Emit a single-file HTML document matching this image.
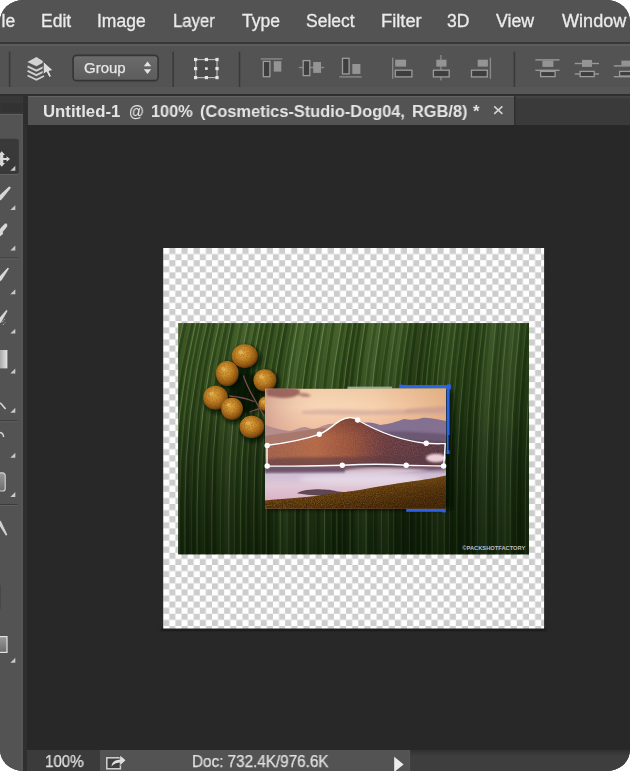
<!DOCTYPE html>
<html>
<head>
<meta charset="utf-8">
<title>Photoshop</title>
<style>
html,body{margin:0;padding:0;background:#fff;}
body{width:630px;height:771px;overflow:hidden;font-family:"Liberation Sans",sans-serif;}
#app{position:absolute;left:0;top:0;width:630px;height:771px;border-radius:23px / 21.5px;overflow:hidden;background:#282828;}
.abs{position:absolute;}
#menubar{left:0;top:0;width:630px;height:43px;background:#535353;}
.mi,.tw,.st,.m{will-change:transform;}
.mi{position:absolute;top:10.4px;height:22px;line-height:22px;font-size:17.5px;color:#ebebeb;-webkit-text-stroke:0.3px #ebebeb;white-space:nowrap;transform-origin:0 50%;}
#optbar{left:0;top:43px;width:630px;height:53px;background:#535353;}
.vsep{position:absolute;width:1px;background:#3d3d3d;box-shadow:1px 0 0 #5c5c5c;}
#tabbar{left:0;top:96px;width:630px;height:28.7px;background:linear-gradient(#464646,#3a3a3a 3.5px);}
#tab{left:28.3px;top:96px;width:485.7px;height:28.7px;box-shadow:1.5px 0 0 #2f2f2f;background:#535353;border-top:1px solid #636363;box-sizing:border-box;}
#tabtext{left:0;top:101.8px;height:20px;line-height:20px;font-size:16.8px;font-weight:bold;color:#e4e4e4;white-space:nowrap;}
.tw{position:absolute;top:0;transform-origin:0 50%;}
#toolhead{left:0;top:95.6px;width:24.3px;height:18.4px;background:#373737;}
#toolbar{left:0;top:114px;width:23.4px;height:657px;background:#535353;box-sizing:border-box;border-right:2px solid #565656;border-top:1.4px solid #626262;}
#toolgap{left:23.4px;top:96px;width:4px;height:675px;background:#2f2f2f;}
#statusbar{left:27.4px;top:750px;width:602px;height:21px;background:#535353;}
#zoomfield{left:27.4px;top:750px;width:72.6px;height:21px;background:#3b3b3b;}
#scrolltrack{left:409px;top:750px;width:221px;height:21px;background:linear-gradient(#313131,#3e3e3e 6px);border-left:1px solid #585858;box-sizing:border-box;}
.st{position:absolute;-webkit-text-stroke:0.25px #e0e0e0;font-size:16px;transform:scaleX(0.94);color:#e0e0e0;white-space:nowrap;line-height:18px;height:18px;transform-origin:0 50%;}
</style>
</head>
<body>
<div id="app">
  <!-- canvas area background is #282828 -->
<!--DOC-->
<svg id="doc" class="abs" style="left:0;top:0" width="630" height="771" viewBox="0 0 630 771">
<defs>
<pattern id="chk" x="163.2" y="248.0" width="12.192" height="12.192" patternUnits="userSpaceOnUse"><rect width="12.192" height="12.192" fill="#fefefe"/><rect x="6.096" width="6.096" height="6.096" fill="#cdcdcd"/><rect y="6.096" width="6.096" height="6.096" fill="#cdcdcd"/></pattern>
<filter id="b06" x="-5%" y="-5%" width="110%" height="110%"><feGaussianBlur stdDeviation="0.55"/></filter>
<filter id="b1" x="-10%" y="-10%" width="120%" height="120%"><feGaussianBlur stdDeviation="1"/></filter>
<filter id="b2" x="-20%" y="-20%" width="140%" height="140%"><feGaussianBlur stdDeviation="2.2"/></filter>
<filter id="b4" x="-30%" y="-30%" width="160%" height="160%"><feGaussianBlur stdDeviation="4"/></filter>
<clipPath id="cv"><rect x="163.2" y="248.0" width="380.9" height="380.6"/></clipPath>
<clipPath id="lf"><rect x="178.1" y="323.1" width="350.9" height="231.5"/></clipPath>
<linearGradient id="lfv" x1="0" y1="0" x2="0" y2="1"><stop offset="0" stop-color="#405c26"/><stop offset="0.25" stop-color="#36501f"/><stop offset="0.5" stop-color="#2a401a"/><stop offset="1" stop-color="#1c2e10"/></linearGradient>
<linearGradient id="lfh" x1="0" y1="0" x2="1" y2="0.35"><stop offset="0" stop-color="#5f7a3c" stop-opacity="0.22"/><stop offset="0.35" stop-color="#405a20" stop-opacity="0.1"/><stop offset="0.7" stop-color="#0a1a04" stop-opacity="0.22"/><stop offset="1" stop-color="#081803" stop-opacity="0.42"/></linearGradient>
<radialGradient id="fr" cx="0.42" cy="0.38" r="0.65"><stop offset="0" stop-color="#e0aa44"/><stop offset="0.4" stop-color="#ca8a2a"/><stop offset="0.8" stop-color="#905614"/><stop offset="1" stop-color="#4e2c08"/></radialGradient>
</defs>
<rect x="160.2" y="627.6" width="385.9" height="4" fill="#1d1d1d" filter="url(#b1)"/>
<g clip-path="url(#cv)"><rect x="157.2" y="242.0" width="392.9" height="392.6" fill="url(#chk)" filter="url(#b06)"/></g>
<g clip-path="url(#lf)">
<rect x="178.1" y="323.1" width="350.9" height="231.5" fill="url(#lfv)"/>
<rect x="178.1" y="323.1" width="350.9" height="231.5" fill="url(#lfh)"/>
<path d="M150.4 557 L150.4 505 Q150.4 412 171.6 321 M156.7 557 L156.7 505 Q156.7 412 177.7 321 M164.2 557 L164.2 505 Q164.2 412 185.9 321 M171.3 557 L171.3 505 Q171.3 412 193.3 321 M176.6 557 L176.6 505 Q176.6 412 198.4 321 M181.8 557 L181.8 505 Q181.8 412 202.8 321 M187.2 557 L187.2 505 Q187.2 412 209.7 321 M193.9 557 L193.9 505 Q193.9 412 214.7 321 M199.4 557 L199.4 505 Q199.4 412 221.8 321 M206.9 557 L206.9 505 Q206.9 412 227.6 321 M214.1 557 L214.1 505 Q214.1 412 233.7 321 M222.8 557 L222.8 505 Q222.8 412 242.7 321 M231.1 557 L231.1 505 Q231.1 412 250.3 321 M236.7 557 L236.7 505 Q236.7 412 257.3 321 M243.0 557 L243.0 505 Q243.0 412 262.8 321 M248.7 557 L248.7 505 Q248.7 412 267.8 321 M256.2 557 L256.2 505 Q256.2 412 274.3 321 M263.3 557 L263.3 505 Q263.3 412 281.5 321 M268.6 557 L268.6 505 Q268.6 412 287.1 321 M276.2 557 L276.2 505 Q276.2 412 294.8 321 M282.5 557 L282.5 505 Q282.5 412 300.2 321 M289.3 557 L289.3 505 Q289.3 412 307.7 321 M297.3 557 L297.3 505 Q297.3 412 315.1 321 M303.3 557 L303.3 505 Q303.3 412 321.6 321 M310.4 557 L310.4 505 Q310.4 412 327.0 321 M318.2 557 L318.2 505 Q318.2 412 334.1 321 M326.9 557 L326.9 505 Q326.9 412 344.0 321 M333.5 557 L333.5 505 Q333.5 412 349.8 321 M339.2 557 L339.2 505 Q339.2 412 355.6 321 M344.5 557 L344.5 505 Q344.5 412 360.5 321 M352.4 557 L352.4 505 Q352.4 412 367.5 321 M360.7 557 L360.7 505 Q360.7 412 376.2 321 M368.4 557 L368.4 505 Q368.4 412 383.2 321 M375.6 557 L375.6 505 Q375.6 412 391.4 321 M383.8 557 L383.8 505 Q383.8 412 398.6 321 M390.7 557 L390.7 505 Q390.7 412 405.3 321 M396.0 557 L396.0 505 Q396.0 412 411.1 321 M403.5 557 L403.5 505 Q403.5 412 416.6 321 M411.7 557 L411.7 505 Q411.7 412 425.4 321 M418.2 557 L418.2 505 Q418.2 412 431.2 321 M423.4 557 L423.4 505 Q423.4 412 435.3 321 M429.1 557 L429.1 505 Q429.1 412 442.4 321 M434.4 557 L434.4 505 Q434.4 412 446.3 321 M440.0 557 L440.0 505 Q440.0 412 453.1 321 M446.5 557 L446.5 505 Q446.5 412 458.4 321 M451.9 557 L451.9 505 Q451.9 412 464.6 321 M459.1 557 L459.1 505 Q459.1 412 471.5 321 M467.2 557 L467.2 505 Q467.2 412 478.2 321 M473.3 557 L473.3 505 Q473.3 412 485.2 321 M479.8 557 L479.8 505 Q479.8 412 489.7 321 M488.4 557 L488.4 505 Q488.4 412 498.2 321 M494.2 557 L494.2 505 Q494.2 412 504.3 321 M500.1 557 L500.1 505 Q500.1 412 509.5 321 M507.4 557 L507.4 505 Q507.4 412 516.9 321 M512.5 557 L512.5 505 Q512.5 412 522.2 321 M519.0 557 L519.0 505 Q519.0 412 528.7 321 M527.6 557 L527.6 505 Q527.6 412 536.8 321 M534.6 557 L534.6 505 Q534.6 412 542.3 321" fill="none" stroke="#0d1a06" stroke-opacity="0.3" stroke-width="2.8" filter="url(#b06)"/>
<path d="M148.1 557 L148.1 505 Q148.1 412 169.3 321 M161.9 557 L161.9 505 Q161.9 412 183.6 321 M174.3 557 L174.3 505 Q174.3 412 196.1 321 M184.9 557 L184.9 505 Q184.9 412 207.4 321 M197.1 557 L197.1 505 Q197.1 412 219.5 321 M211.8 557 L211.8 505 Q211.8 412 231.4 321 M228.8 557 L228.8 505 Q228.8 412 248.0 321 M240.7 557 L240.7 505 Q240.7 412 260.5 321 M253.9 557 L253.9 505 Q253.9 412 272.0 321 M266.3 557 L266.3 505 Q266.3 412 284.8 321 M280.2 557 L280.2 505 Q280.2 412 297.9 321 M295.0 557 L295.0 505 Q295.0 412 312.8 321 M308.1 557 L308.1 505 Q308.1 412 324.7 321 M324.6 557 L324.6 505 Q324.6 412 341.7 321 M336.9 557 L336.9 505 Q336.9 412 353.3 321 M350.1 557 L350.1 505 Q350.1 412 365.2 321 M366.1 557 L366.1 505 Q366.1 412 380.9 321" fill="none" stroke="#90aa6a" stroke-opacity="0.42" stroke-width="1" filter="url(#b06)"/>
<path d="M381.5 557 L381.5 505 Q381.5 412 396.3 321 M393.7 557 L393.7 505 Q393.7 412 408.8 321 M409.4 557 L409.4 505 Q409.4 412 423.1 321 M421.1 557 L421.1 505 Q421.1 412 433.0 321 M432.1 557 L432.1 505 Q432.1 412 444.0 321 M444.2 557 L444.2 505 Q444.2 412 456.1 321 M456.8 557 L456.8 505 Q456.8 412 469.2 321 M471.0 557 L471.0 505 Q471.0 412 482.9 321 M486.1 557 L486.1 505 Q486.1 412 495.9 321 M497.8 557 L497.8 505 Q497.8 412 507.2 321 M510.2 557 L510.2 505 Q510.2 412 519.9 321 M525.3 557 L525.3 505 Q525.3 412 534.5 321" fill="none" stroke="#88a262" stroke-opacity="0.28" stroke-width="1" filter="url(#b06)"/>
<path d="M154.4 557 L154.4 505 Q154.4 412 175.4 321 M169.0 557 L169.0 505 Q169.0 412 191.0 321 M179.5 557 L179.5 505 Q179.5 412 200.5 321 M191.6 557 L191.6 505 Q191.6 412 212.4 321 M204.6 557 L204.6 505 Q204.6 412 225.3 321 M220.5 557 L220.5 505 Q220.5 412 240.4 321 M234.4 557 L234.4 505 Q234.4 412 255.0 321 M246.4 557 L246.4 505 Q246.4 412 265.5 321 M261.0 557 L261.0 505 Q261.0 412 279.2 321 M273.9 557 L273.9 505 Q273.9 412 292.5 321 M287.0 557 L287.0 505 Q287.0 412 305.4 321 M301.0 557 L301.0 505 Q301.0 412 319.3 321 M315.9 557 L315.9 505 Q315.9 412 331.8 321 M331.2 557 L331.2 505 Q331.2 412 347.5 321 M342.2 557 L342.2 505 Q342.2 412 358.2 321 M358.4 557 L358.4 505 Q358.4 412 373.9 321 M373.3 557 L373.3 505 Q373.3 412 389.1 321 M388.4 557 L388.4 505 Q388.4 412 403.0 321 M401.2 557 L401.2 505 Q401.2 412 414.3 321 M415.9 557 L415.9 505 Q415.9 412 428.9 321 M426.8 557 L426.8 505 Q426.8 412 440.1 321 M437.7 557 L437.7 505 Q437.7 412 450.8 321 M449.6 557 L449.6 505 Q449.6 412 462.3 321 M464.9 557 L464.9 505 Q464.9 412 475.9 321 M477.5 557 L477.5 505 Q477.5 412 487.4 321 M491.9 557 L491.9 505 Q491.9 412 502.0 321 M505.1 557 L505.1 505 Q505.1 412 514.6 321 M516.7 557 L516.7 505 Q516.7 412 526.4 321 M532.3 557 L532.3 505 Q532.3 412 540.0 321" fill="none" stroke="#7c9a5a" stroke-opacity="0.2" stroke-width="1" filter="url(#b06)"/>
<g filter="url(#b2)"><path d="M168.1 557 L168.1 505 Q168.1 412 190.1 321" fill="none" stroke="#061004" stroke-opacity="0.10" stroke-width="12.7"/><path d="M189.3 557 L189.3 505 Q189.3 412 210.9 321" fill="none" stroke="#061004" stroke-opacity="0.10" stroke-width="12.9"/><path d="M210.8 557 L210.8 505 Q210.8 412 231.6 321" fill="none" stroke="#061004" stroke-opacity="0.10" stroke-width="10.2"/><path d="M227.7 557 L227.7 505 Q227.7 412 247.9 321" fill="none" stroke="#a8c080" stroke-opacity="0.06" stroke-width="16.0"/><path d="M254.4 557 L254.4 505 Q254.4 412 273.6 321" fill="none" stroke="#061004" stroke-opacity="0.12" stroke-width="9.3"/><path d="M269.9 557 L269.9 505 Q269.9 412 288.4 321" fill="none" stroke="#061004" stroke-opacity="0.14" stroke-width="8.8"/><path d="M284.6 557 L284.6 505 Q284.6 412 302.5 321" fill="none" stroke="#a8c080" stroke-opacity="0.11" stroke-width="14.7"/><path d="M309.0 557 L309.0 505 Q309.0 412 326.1 321" fill="none" stroke="#a8c080" stroke-opacity="0.10" stroke-width="8.5"/><path d="M323.3 557 L323.3 505 Q323.3 412 339.8 321" fill="none" stroke="#a8c080" stroke-opacity="0.07" stroke-width="10.2"/><path d="M340.3 557 L340.3 505 Q340.3 412 356.2 321" fill="none" stroke="#061004" stroke-opacity="0.09" stroke-width="12.9"/><path d="M361.7 557 L361.7 505 Q361.7 412 376.8 321" fill="none" stroke="#a8c080" stroke-opacity="0.11" stroke-width="13.4"/><path d="M384.0 557 L384.0 505 Q384.0 412 398.3 321" fill="none" stroke="#a8c080" stroke-opacity="0.09" stroke-width="14.8"/><path d="M408.6 557 L408.6 505 Q408.6 412 422.0 321" fill="none" stroke="#061004" stroke-opacity="0.14" stroke-width="18.0"/><path d="M438.6 557 L438.6 505 Q438.6 412 450.8 321" fill="none" stroke="#a8c080" stroke-opacity="0.08" stroke-width="15.2"/><path d="M463.9 557 L463.9 505 Q463.9 412 475.2 321" fill="none" stroke="#061004" stroke-opacity="0.06" stroke-width="11.2"/><path d="M482.5 557 L482.5 505 Q482.5 412 493.1 321" fill="none" stroke="#a8c080" stroke-opacity="0.13" stroke-width="12.2"/><path d="M502.9 557 L502.9 505 Q502.9 412 512.7 321" fill="none" stroke="#a8c080" stroke-opacity="0.13" stroke-width="17.6"/><path d="M532.3 557 L532.3 505 Q532.3 412 541.1 321" fill="none" stroke="#a8c080" stroke-opacity="0.13" stroke-width="10.4"/></g>
<linearGradient id="lfb" x1="0" y1="0" x2="0" y2="1"><stop offset="0" stop-color="#000" stop-opacity="0"/><stop offset="0.4" stop-color="#000" stop-opacity="0"/><stop offset="1" stop-color="#041002" stop-opacity="0.38"/></linearGradient>
<rect x="178.1" y="323.1" width="350.9" height="231.5" fill="url(#lfb)"/>
<g filter="url(#b2)" fill="#070d03" fill-opacity="0.85">
<ellipse cx="246.8" cy="358.7" rx="13.8" ry="12.700000000000001"/>
<ellipse cx="229.3" cy="376.0" rx="12.200000000000001" ry="13.4"/>
<ellipse cx="266.9" cy="382.8" rx="12.3" ry="11.9"/>
<ellipse cx="267.4" cy="406.3" rx="7.8" ry="8.0"/>
<ellipse cx="217.6" cy="400.3" rx="13.200000000000001" ry="12.8"/>
<ellipse cx="234.1" cy="411.3" rx="11.700000000000001" ry="11.9"/>
<ellipse cx="253.9" cy="429.5" rx="13.100000000000001" ry="12.0"/>
<ellipse cx="246" cy="393" rx="17" ry="22"/>
</g>
<g fill="none" stroke="#7a4a4c" stroke-width="1.3" stroke-linecap="round">
<path d="M243.6 376 C247 388 254 398 264 416"/><path d="M229.7 396 C240 397 248 399 254 401.5"/><path d="M250 412 C254 410 258 409 262 408"/>
</g>
<ellipse cx="244.8" cy="356.2" rx="13" ry="11.9" fill="url(#fr)"/>
<ellipse cx="244.8" cy="356.2" rx="12.5" ry="11.4" fill="#6a3e0c" fill-opacity="0.45" filter="url(#grain)"/>
<ellipse cx="240.6" cy="352.2" rx="2.6" ry="2.0" fill="#f2d48a" fill-opacity="0.38" filter="url(#b06)"/>
<ellipse cx="227.3" cy="373.5" rx="11.4" ry="12.6" fill="url(#fr)"/>
<ellipse cx="227.3" cy="373.5" rx="10.9" ry="12.1" fill="#6a3e0c" fill-opacity="0.45" filter="url(#grain)"/>
<ellipse cx="223.7" cy="369.2" rx="2.3" ry="2.1" fill="#f2d48a" fill-opacity="0.38" filter="url(#b06)"/>
<ellipse cx="264.9" cy="380.3" rx="11.5" ry="11.1" fill="url(#fr)"/>
<ellipse cx="264.9" cy="380.3" rx="11.0" ry="10.6" fill="#6a3e0c" fill-opacity="0.45" filter="url(#grain)"/>
<ellipse cx="261.2" cy="376.5" rx="2.3" ry="1.9" fill="#f2d48a" fill-opacity="0.38" filter="url(#b06)"/>
<ellipse cx="265.4" cy="403.8" rx="7" ry="7.2" fill="url(#fr)"/>
<ellipse cx="265.4" cy="403.8" rx="6.5" ry="6.7" fill="#6a3e0c" fill-opacity="0.45" filter="url(#grain)"/>
<ellipse cx="263.2" cy="401.4" rx="1.4" ry="1.2" fill="#f2d48a" fill-opacity="0.38" filter="url(#b06)"/>
<ellipse cx="215.6" cy="397.8" rx="12.4" ry="12" fill="url(#fr)"/>
<ellipse cx="215.6" cy="397.8" rx="11.9" ry="11.5" fill="#6a3e0c" fill-opacity="0.45" filter="url(#grain)"/>
<ellipse cx="211.6" cy="393.7" rx="2.5" ry="2.0" fill="#f2d48a" fill-opacity="0.38" filter="url(#b06)"/>
<ellipse cx="232.1" cy="408.8" rx="10.9" ry="11.1" fill="url(#fr)"/>
<ellipse cx="232.1" cy="408.8" rx="10.4" ry="10.6" fill="#6a3e0c" fill-opacity="0.45" filter="url(#grain)"/>
<ellipse cx="228.6" cy="405.0" rx="2.2" ry="1.9" fill="#f2d48a" fill-opacity="0.38" filter="url(#b06)"/>
<ellipse cx="251.9" cy="427" rx="12.3" ry="11.2" fill="url(#fr)"/>
<ellipse cx="251.9" cy="427" rx="11.8" ry="10.7" fill="#6a3e0c" fill-opacity="0.45" filter="url(#grain)"/>
<ellipse cx="248.0" cy="423.2" rx="2.5" ry="1.9" fill="#f2d48a" fill-opacity="0.38" filter="url(#b06)"/>
</g>
<defs>
<clipPath id="ph"><rect x="265.0" y="388.6" width="181.0" height="120.1"/></clipPath>
<linearGradient id="sky" x1="0" y1="0" x2="0" y2="1"><stop offset="0" stop-color="#f2cdaa"/><stop offset="0.22" stop-color="#f8d6b6"/><stop offset="0.5" stop-color="#f0bfa2"/><stop offset="0.75" stop-color="#e3aa9c"/><stop offset="1" stop-color="#d9a09a"/></linearGradient>
<linearGradient id="skyr" x1="0" y1="0" x2="1" y2="0"><stop offset="0" stop-color="#c08a82" stop-opacity="0.6"/><stop offset="0.3" stop-color="#f0c8a8" stop-opacity="0"/><stop offset="0.6" stop-color="#e0a070" stop-opacity="0.1"/><stop offset="1" stop-color="#d89a68" stop-opacity="0.6"/></linearGradient>
<linearGradient id="mtn" x1="0" y1="0" x2="1" y2="0"><stop offset="0" stop-color="#9c5e4c"/><stop offset="0.28" stop-color="#b26848"/><stop offset="0.48" stop-color="#94503c"/><stop offset="0.66" stop-color="#643840"/><stop offset="1" stop-color="#4e3444"/></linearGradient>
<linearGradient id="mtnv" x1="0" y1="0" x2="0" y2="1"><stop offset="0" stop-color="#3a1a20" stop-opacity="0.35"/><stop offset="0.35" stop-color="#3a1a20" stop-opacity="0"/><stop offset="0.8" stop-color="#3a2030" stop-opacity="0"/><stop offset="1" stop-color="#3a2030" stop-opacity="0.35"/></linearGradient>
<linearGradient id="fog" x1="0" y1="0" x2="0" y2="1"><stop offset="0" stop-color="#7e6478"/><stop offset="0.18" stop-color="#cdbcd4"/><stop offset="0.45" stop-color="#e0c8d6"/><stop offset="0.8" stop-color="#dcb0c4"/><stop offset="1" stop-color="#c8a0b8"/></linearGradient>
<linearGradient id="fst" x1="0" y1="0" x2="0" y2="1"><stop offset="0" stop-color="#86581a"/><stop offset="0.35" stop-color="#664010"/><stop offset="1" stop-color="#44290a"/></linearGradient>
<filter id="grain" x="0" y="0" width="100%" height="100%"><feTurbulence type="fractalNoise" baseFrequency="0.9" numOctaves="2" seed="3" result="n"/><feColorMatrix in="n" type="matrix" values="0 0 0 0 0  0 0 0 0 0  0 0 0 0 0  1.6 0 0 0 -0.55" result="a"/><feComposite in="SourceGraphic" in2="a" operator="in"/></filter>
</defs>
<g clip-path="url(#lf)"><rect x="269.0" y="391.6" width="183.5" height="118.1" fill="#050a02" fill-opacity="0.8" filter="url(#b2)"/></g>
<g fill="#2a62ea">
<rect x="399.8" y="385" width="50.8" height="3.2"/><rect x="399.4" y="384.6" width="3.6" height="4.2"/><rect x="447" y="384.4" width="3.8" height="4.6"/>
<rect x="446.6" y="385" width="3" height="50"/><rect x="446.8" y="435" width="1.8" height="19"/><rect x="446.6" y="450.5" width="3" height="3.4"/>
<rect x="406.2" y="508.8" width="39.2" height="3"/><rect x="441.8" y="508.2" width="3.9" height="4.2"/>
</g>
<rect x="347.5" y="386.6" width="44.5" height="2.4" fill="#9caa8a"/>
<rect x="392" y="387.9" width="54.4" height="1.2" fill="#8c8872"/>
<g clip-path="url(#ph)">
<rect x="265.0" y="388.6" width="181.0" height="80" fill="url(#sky)"/>
<rect x="265.0" y="388.6" width="181.0" height="80" fill="url(#skyr)"/>
<g filter="url(#b1)">
<path d="M266 389 C275 387 292 387 299 389.5 C302 393 298 396.5 290 397.5 C282 399 274 396.5 267 396 Z" fill="#935c58" fill-opacity="0.9"/>
<path d="M299 393.5 C304 392 309 393.5 311 396 C307 397.6 302 397 299 395.6 Z" fill="#a06a64" fill-opacity="0.75"/>
<path d="M302 411 C320 408.5 345 409.5 372 410.5 C395 409 420 410 446 408.5 L446 414.5 C420 414.5 395 415 372 415 C345 415.5 320 415 302 414 Z" fill="#c8a09c" fill-opacity="0.5"/>
<path d="M405 410 C420 406.5 436 407 446 405.5 L446 411.5 L405 413 Z" fill="#c0928e" fill-opacity="0.45"/>
</g>
<path d="M265 425 C272 427 280 430 290 431 C296 430 300 427 305 427 C310 428 312 430 318 428 C324 425 330 423 336 424 L345 440 L265 452 Z" fill="#b48c8c" filter="url(#b06)"/>
<path d="M265 436 C280 433 300 432 320 428 L350 430 L350 452 L265 452 Z" fill="#a67468" fill-opacity="0.85" filter="url(#b06)"/>
<path d="M360 424 C368 421 374 423 380 425 C390 424 398 421 404 419 C410 420 416 420 422 418 C430 417 438 420 446 421 L446 450 L360 450 Z" fill="#847090" filter="url(#b06)"/>
<path d="M372 432 C395 430 420 432 446 434 L446 452 L380 452 Z" fill="#685470" fill-opacity="0.9" filter="url(#b1)"/>
<path d="M400 441 C415 440 432 442 446 443 L446 470 L390 470 Z" fill="#5a3c48" filter="url(#b1)"/>
<path id="mt" d="M265 446.5 C285 444 304 440 319 434.5 C330 430 338 418.5 350 418 C358 418 362 422 372 427 C392 437 410 442 426 443.6 C434 444.3 440 444 446 444 L446 472 L265 472 Z" fill="url(#mtn)"/>
<path d="M265 446.5 C285 444 304 440 319 434.5 C330 430 338 418.5 350 418 C358 418 362 422 372 427 C392 437 410 442 426 443.6 C434 444.3 440 444 446 444 L446 472 L265 472 Z" fill="url(#mtnv)"/>
<path d="M265 446.5 C285 444 304 440 319 434.5 C330 430 338 418.5 350 418 C358 418 362 422 372 427 C392 437 410 442 426 443.6 C434 444.3 440 444 446 444 L446 472 L265 472 Z" fill="#d08a60" filter="url(#grain)" fill-opacity="0.35"/>
<path d="M265 459 C300 456 340 458 380 456 C410 455 430 458 446 457 L446 473 L265 473 Z" fill="#5c3a44" fill-opacity="0.6" filter="url(#b1)"/>
<ellipse cx="436" cy="458" rx="10" ry="4.2" fill="#ecd0d8" filter="url(#b1)"/>
<rect x="265" y="466.5" width="181" height="43" fill="url(#fog)"/>
<path d="M265 466.5 L446 466.5 L446 469 C420 471 400 469.5 380 471 C350 473.5 300 472 265 473 Z" fill="#6a5064" fill-opacity="0.9" filter="url(#b1)"/>
<path d="M345 470 C370 466 400 468 430 470 C400 474 370 475 345 474 Z" fill="#e6d2dc" fill-opacity="0.8" filter="url(#b1)"/>
<ellipse cx="360" cy="479" rx="62" ry="5.5" fill="#efe4ee" fill-opacity="0.6" filter="url(#b2)"/>
<path d="M297 493.2 C303 490 312 489.2 322 489.4 C330 489.4 334 490.4 338 491.4 C346 492 352 493 356 494.4 C340 496 312 496.4 297 493.2 Z" fill="#5e4652" filter="url(#b06)"/>
<path id="fo" d="M265 500.5 C285 498.5 300 498 315 496 C335 493 350 492 368 488.5 C390 484.5 410 482 425 479.6 C435 478 440 477 446 475.6 L446 510 L265 510 Z" fill="url(#fst)"/>
<path d="M265 500.5 C285 498.5 300 498 315 496 C335 493 350 492 368 488.5 C390 484.5 410 482 425 479.6 C435 478 440 477 446 475.6 L446 510 L265 510 Z" fill="#d4922a" filter="url(#grain)" fill-opacity="0.6"/>
<linearGradient id="fsd" x1="0" y1="0" x2="1" y2="0.5"><stop offset="0" stop-color="#2a1404" stop-opacity="0"/><stop offset="0.5" stop-color="#2a1404" stop-opacity="0.12"/><stop offset="1" stop-color="#2a1404" stop-opacity="0.5"/></linearGradient>
<path d="M265 500.5 C285 498.5 300 498 315 496 C335 493 350 492 368 488.5 C390 484.5 410 482 425 479.6 C435 478 440 477 446 475.6 L446 510 L265 510 Z" fill="url(#fsd)"/>
</g>
<g fill="none" stroke="#ffffff" stroke-width="1.4" stroke-linejoin="round">
<path d="M267 445.3 C285 443 304 439.5 319.3 434.3 C331 430 338 418 350 417.6 C354 417.5 356 419 357.7 420 C380 433 405 441 426.2 443.2 C434 444 440 443.6 445.2 443.6 L444.6 455 L443.6 466 C432 465.6 418 465.6 406.2 465.3 C385 463.8 365 464 342.3 465.3 C315 466.4 290 466.2 267 466 Z"/>
</g>
<g fill="#ffffff">
<circle cx="267.2" cy="445.4" r="2.7"/>
<circle cx="319.3" cy="434.3" r="2.7"/>
<circle cx="357.7" cy="420" r="2.7"/>
<circle cx="426.2" cy="443.2" r="2.7"/>
<circle cx="267.2" cy="466" r="2.7"/>
<circle cx="342.3" cy="465.3" r="2.7"/>
<circle cx="406.2" cy="465.3" r="2.7"/>
<circle cx="443.6" cy="466" r="2.7"/>
</g>
<text x="462.3" y="550.2" font-family="'Liberation Sans',sans-serif" font-size="4.8" font-weight="bold" fill="#dedede" fill-opacity="0.85" textLength="63" lengthAdjust="spacingAndGlyphs">©PACKSHOTFACTORY</text>
</svg>
<!--/DOC-->
  <div id="menubar" class="abs">
    <span class="mi" style="left:-13.1px;clip-path:inset(0 0 0 14.4px)">File</span>
    <span class="mi" style="left:40.7px">Edit</span>
    <span class="mi" style="left:96.5px">Image</span>
    <span class="mi" style="left:173px;transform:scaleX(0.953)">Layer</span>
    <span class="mi" style="left:241.7px">Type</span>
    <span class="mi" style="left:306.4px">Select</span>
    <span class="mi" style="left:381.3px;transform:scaleX(1.045)">Filter</span>
    <span class="mi" style="left:447px">3D</span>
    <span class="mi" style="left:496.3px;transform:scaleX(1.015)">View</span>
    <span class="mi" style="left:561.5px;transform:scaleX(1.033)">Window</span>
  </div>
  <div id="optbar" class="abs">
    <div class="abs" style="left:0;top:-1.2px;width:630px;height:2px;background:#383838"></div>
    <div class="abs" style="left:0;top:0.8px;width:630px;height:2.2px;background:#5c5c5c"></div>
    <div class="abs" style="left:0;top:44px;width:630px;height:6.6px;background:#575757"></div>
    <div class="abs" style="left:0;top:51px;width:630px;height:2px;background:#2f2f2f"></div>
  </div>
  <div id="tabbar" class="abs"></div>
  <div id="tab" class="abs"></div>
  <div id="tabtext" class="abs"><span class="tw" style="left:43px">Untitled-1</span><span class="tw" style="left:129px;transform:scaleX(0.9)">@</span><span class="tw" style="left:151px;transform:scaleX(0.97)">100%</span><span class="tw" style="left:199.5px;transform:scaleX(0.977)">(Cosmetics-Studio-Dog04,</span><span class="tw" style="left:411.6px;transform:scaleX(0.975)">RGB/8)</span><span class="tw" style="left:472.5px">*</span></div>
  <div id="toolhead" class="abs"></div>
  <div id="toolbar" class="abs"></div>
  <div id="toolgap" class="abs"></div>
  <div class="abs" style="left:24.3px;top:95.6px;width:4px;height:29.1px;background:#2e2e2e"></div>
  <div id="statusbar" class="abs"></div>
  <div id="zoomfield" class="abs"></div>
  <div id="scrolltrack" class="abs"></div>

  <svg id="icons" class="abs" style="left:0;top:0" width="630" height="771" viewBox="0 0 630 771">
    <!-- option bar separators -->
    <g>
      <rect x="8.8" y="51.6" width="1.6" height="35.4" fill="#3a3a3a"/>
      <rect x="172.4" y="51.6" width="1.6" height="35.4" fill="#3a3a3a"/>
      <rect x="238.7" y="51.6" width="1.6" height="35.4" fill="#3a3a3a"/>
      <rect x="513.6" y="51.6" width="1.6" height="35.4" fill="#3a3a3a"/>
    </g>
    <!-- auto-select layers icon -->
    <g>
      <path d="M27.4 62.1 L36.4 57 L44.4 62.1 L36.4 66.2 Z" fill="#d2d2d2"/>
      <path d="M27.6 66.3 L36.4 70.6 L44 66.8" fill="none" stroke="#cfcfcf" stroke-width="1.9"/>
      <path d="M27.6 70.9 L36.4 75.2 L44 71.4" fill="none" stroke="#cfcfcf" stroke-width="1.9"/>
      <path d="M27.6 75.5 L36.4 79.8 L44 76" fill="none" stroke="#cfcfcf" stroke-width="1.9"/>
      <path d="M43.2 61.2 L43.2 74.6 L46.4 72.2 L49 77.6 L51.6 76.4 L49.2 71.2 L53.4 70.6 Z" fill="#dcdcdc" stroke="#4a4a4a" stroke-width="1"/>
    </g>
    <!-- Group dropdown -->
    <defs>
      <linearGradient id="gdd" x1="0" y1="0" x2="0" y2="1"><stop offset="0" stop-color="#6b6b6b"/><stop offset="1" stop-color="#5c5c5c"/></linearGradient>
    </defs>
    <rect x="73.1" y="55.4" width="85" height="25.2" rx="3.4" fill="url(#gdd)" stroke="#353535" stroke-width="1.6"/>
    <path d="M143.8 66.3 L147.5 61.6 L151.2 66.3 Z M143.8 69.2 L147.5 73.9 L151.2 69.2 Z" fill="#e4e4e4"/>
    <!-- show transform controls -->
    <g fill="#4b4b4b" stroke="#bcbcbc" stroke-width="1.1">
      <rect x="195.8" y="59.6" width="21.2" height="18"/>
    </g>
    <g fill="#e6e6e6">
      <rect x="194" y="57.9" width="3.2" height="3.2"/><rect x="204.8" y="57.9" width="3.2" height="3.2"/><rect x="215.4" y="57.9" width="3.2" height="3.2"/>
      <rect x="194" y="67" width="3.2" height="3.2"/><rect x="205.1" y="67.3" width="2.6" height="2.6"/><rect x="215.4" y="67" width="3.2" height="3.2"/>
      <rect x="194" y="76" width="3.2" height="3.2"/><rect x="204.8" y="76" width="3.2" height="3.2"/><rect x="215.4" y="76" width="3.2" height="3.2"/>
    </g>

    <defs><pattern id="grip" x="0" y="103" width="2.9" height="2.9" patternUnits="userSpaceOnUse"><rect x="0" y="0" width="1.45" height="1.45" fill="#2b2b2b"/><rect x="1.45" y="1.45" width="1.45" height="1.45" fill="#2b2b2b"/></pattern></defs>
    <rect x="0.5" y="103" width="22" height="8.7" fill="url(#grip)" opacity="0.8"/>
    <!-- toolbar icons -->
    <g id="tools">
      <path d="M0 138.8 L16.4 138.8 Q18.8 138.8 18.8 141.2 L18.8 171.6 Q18.8 174 16.4 174 L0 174 Z" fill="#393939"/>
      <rect x="0" y="174" width="18" height="1" fill="#626262"/>
      <g fill="#dadada">
        <path d="M1.7 151.2 L5 155 L3.3 155 L3.3 158.1 L6.6 158.1 L6.6 156.2 L10 159 L6.6 161.8 L6.6 159.9 L3.3 159.9 L3.3 163 L5 163 L1.7 166.8 L-1.6 163 L0.1 163 L0.1 159.9 L-3 159.9 L-3 158.1 L0.1 158.1 L0.1 155 L-1.6 155 Z"/>
      </g>
      <g fill="#c9c9c9">
        <path d="M15.3 165.8 L15.3 170.70000000000002 L10.3 170.70000000000002 Z"/><path d="M15.3 205.2 L15.3 210.1 L10.3 210.1 Z"/><path d="M15.3 245.5 L15.3 250.4 L10.3 250.4 Z"/><path d="M15.3 289.3 L15.3 294.2 L10.3 294.2 Z"/><path d="M15.3 328.7 L15.3 333.59999999999997 L10.3 333.59999999999997 Z"/><path d="M15.3 368.5 L15.3 373.4 L10.3 373.4 Z"/><path d="M15.3 407.8 L15.3 412.7 L10.3 412.7 Z"/><path d="M15.3 452.8 L15.3 457.7 L10.3 457.7 Z"/><path d="M15.3 492 L15.3 496.9 L10.3 496.9 Z"/><path d="M15.3 657.8 L15.3 662.6999999999999 L10.3 662.6999999999999 Z"/>
      </g>
      <!-- magic wand -->
      <path d="M-1 195.4 L9.2 186 L11.4 187.8 L1.6 200 L-1 201.4 Z" fill="#d6d6d6" stroke="#3e3e3e" stroke-width="0.6"/>
      <!-- eyedropper -->
      <path d="M-1 229.6 L3 225 Q5.8 221.8 7.4 223.8 Q8.6 226 5.8 228.8 L3 232 L3.6 233.6 L1.8 235.4 L-1 237.6 Z" fill="#d8d8d8" stroke="#3e3e3e" stroke-width="0.6"/>
      <!-- separators -->
      <rect x="0" y="257.4" width="17.6" height="1" fill="#3c3c3c"/><rect x="0" y="258.4" width="17.6" height="1" fill="#5f5f5f"/>
      <rect x="0" y="420.2" width="17.6" height="1" fill="#3c3c3c"/><rect x="0" y="421.2" width="17.6" height="1" fill="#5f5f5f"/>
      <rect x="0" y="504" width="17.6" height="1" fill="#3c3c3c"/><rect x="0" y="505" width="17.6" height="1" fill="#5f5f5f"/>
      <!-- brush -->
      <path d="M-1 276.6 L7.8 267.2 L9.4 268.4 L2 280.2 L-1 282.4 Z" fill="#d8d8d8" stroke="#3e3e3e" stroke-width="0.6"/>
      <!-- history brush -->
      <path d="M-1 318 L6.4 309.6 L8 310.8 L1.6 322.2 L-1 324.4 Z" fill="#d8d8d8" stroke="#3e3e3e" stroke-width="0.6"/>
      <path d="M2.4 322 L4.6 319.4 M2.8 325 L5 322.6" stroke="#bdbdbd" stroke-width="1" stroke-dasharray="1.2 1" fill="none"/>
      <!-- gradient -->
      <defs><linearGradient id="tg" x1="0" y1="0" x2="1" y2="0"><stop offset="0" stop-color="#9a9a9a"/><stop offset="1" stop-color="#e4e4e4"/></linearGradient>
      <linearGradient id="tg2" x1="0" y1="0" x2="0" y2="1"><stop offset="0" stop-color="#9a9a9a"/><stop offset="1" stop-color="#6c6c6c"/></linearGradient></defs>
      <rect x="-2" y="350" width="9.4" height="18.4" fill="url(#tg)"/>
      <!-- pen -->
      <path d="M-1 402.6 L1.2 403.8 L5.6 409" fill="none" stroke="#d4d4d4" stroke-width="1.7"/>
      <!-- path select -->
      <path d="M-1 432.4 Q3.4 432.4 3.6 437" fill="none" stroke="#d4d4d4" stroke-width="1.5"/>
      <!-- shape -->
      <rect x="-4" y="472.8" width="9.2" height="18.2" rx="2.6" fill="url(#tg2)" stroke="#d0d0d0" stroke-width="1.2"/>
      <!-- zoom handle -->
      <path d="M-1 520.6 L1 520.6 L7.6 534.4 L6 536.4 L-1 525.4 Z" fill="#d2d2d2" stroke="#3e3e3e" stroke-width="0.6"/>
      <!-- color swatch -->
      <rect x="-3" y="636.6" width="10" height="15.8" fill="url(#tg2)" stroke="#e2e2e2" stroke-width="1.2"/>
      <rect x="0" y="585" width="1" height="24" fill="#474747"/>
    </g>
    <path d="M494.2 106.4 L502.4 113.8 M502.4 106.4 L494.2 113.8" stroke="#d4d4d4" stroke-width="1.6" fill="none"/>
    <!-- status bar icons -->
    <g id="sticons">
      <rect x="106.8" y="757.8" width="13.6" height="11" fill="#3f3f3f" stroke="#d2d2d2" stroke-width="1.5"/>
      <path d="M111.4 766.4 Q112 759.8 120.2 759.4 L120.2 755.4 L125.6 760.3 L120.2 765.2 L120.2 762.4 Q115 762.4 111.4 766.4 Z" fill="#dedede" stroke="#3a3a3a" stroke-width="1" paint-order="stroke"/>
      <path d="M394.2 756.8 L403.6 764.4 L394.2 772 Z" fill="#ececec"/>
    </g>
    <!-- align icons -->
    <g id="align">
      <!-- align top -->
      <rect x="260.7" y="58.2" width="21.6" height="1.4" fill="#888888"/>
      <rect x="263.3" y="61.4" width="6.6" height="15.3" fill="#3e3e3e" stroke="#9c9c9c" stroke-width="1.3"/>
      <rect x="273.8" y="61.2" width="7.5" height="10.4" fill="#949494"/>
      <!-- align vcenter -->
      <rect x="298.8" y="66.8" width="25.4" height="1.4" fill="#888888"/>
      <rect x="303.2" y="60.6" width="6.6" height="15" fill="#3e3e3e" stroke="#9c9c9c" stroke-width="1.3"/>
      <rect x="313.2" y="62" width="7.8" height="10.9" fill="#949494"/>
      <!-- align bottom -->
      <rect x="339.3" y="76.2" width="22.4" height="1.4" fill="#888888"/>
      <rect x="342.5" y="58.3" width="6.6" height="15.6" fill="#3e3e3e" stroke="#9c9c9c" stroke-width="1.3"/>
      <rect x="352.3" y="64" width="8.1" height="9.9" fill="#949494"/>
      <!-- align left -->
      <rect x="392" y="57.7" width="1.4" height="21.1" fill="#888888"/>
      <rect x="395.2" y="59.7" width="10.9" height="6.9" fill="#949494"/>
      <rect x="395.3" y="70.2" width="16.6" height="6.7" fill="#3e3e3e" stroke="#9c9c9c" stroke-width="1.3"/>
      <!-- align hcenter -->
      <rect x="440.2" y="55" width="1.4" height="25.5" fill="#888888"/>
      <rect x="436.3" y="59.7" width="10.2" height="6.9" fill="#949494"/>
      <rect x="433.4" y="70.2" width="15.8" height="6.7" fill="#3e3e3e" stroke="#9c9c9c" stroke-width="1.3"/>
      <!-- align right -->
      <rect x="489.7" y="57.7" width="1.4" height="21.1" fill="#888888"/>
      <rect x="477.7" y="59.7" width="10.2" height="6.9" fill="#949494"/>
      <rect x="471.5" y="70.2" width="15.8" height="6.7" fill="#3e3e3e" stroke="#9c9c9c" stroke-width="1.3"/>
      <!-- distribute top -->
      <rect x="535.3" y="59.2" width="24.2" height="1.4" fill="#989898"/>
      <rect x="542.4" y="60.6" width="11" height="6.3" fill="#949494"/>
      <rect x="535.3" y="69.6" width="24.2" height="1.4" fill="#989898"/>
      <rect x="540.6" y="71.4" width="14.5" height="5.2" fill="#3e3e3e" stroke="#9c9c9c" stroke-width="1.3"/>
      <!-- distribute vcenter -->
      <rect x="574.8" y="62.8" width="24.2" height="1.4" fill="#989898"/>
      <rect x="582" y="59.9" width="10" height="7" fill="#949494"/>
      <rect x="574.8" y="73.3" width="24.2" height="1.4" fill="#989898"/>
      <rect x="580.1" y="71.4" width="14.1" height="5.2" fill="#3e3e3e" stroke="#9c9c9c" stroke-width="1.3"/>
      <!-- distribute bottom -->
      <rect x="613.8" y="65.2" width="24.2" height="1.4" fill="#989898"/>
      <rect x="621.4" y="60.6" width="10" height="5" fill="#949494"/>
      <rect x="619.6" y="71.4" width="14.1" height="4.6" fill="#3e3e3e" stroke="#9c9c9c" stroke-width="1.3"/>
      <rect x="613.8" y="76" width="24.2" height="1.4" fill="#989898"/>
    </g>
  </svg>
  <span class="m abs" id="grouptxt" style="-webkit-text-stroke:0.25px #e6e6e6;left:83.6px;top:58px;font-size:15px;line-height:20px;color:#e6e6e6;white-space:nowrap;transform-origin:0 50%">Group</span>
  <span class="st" style="left:45px;top:753px">100%</span>
  <span class="st" style="left:192.2px;top:753px;transform:scaleX(0.953)">Doc: 732.4K/976.6K</span>
</div>
</body>
</html>
